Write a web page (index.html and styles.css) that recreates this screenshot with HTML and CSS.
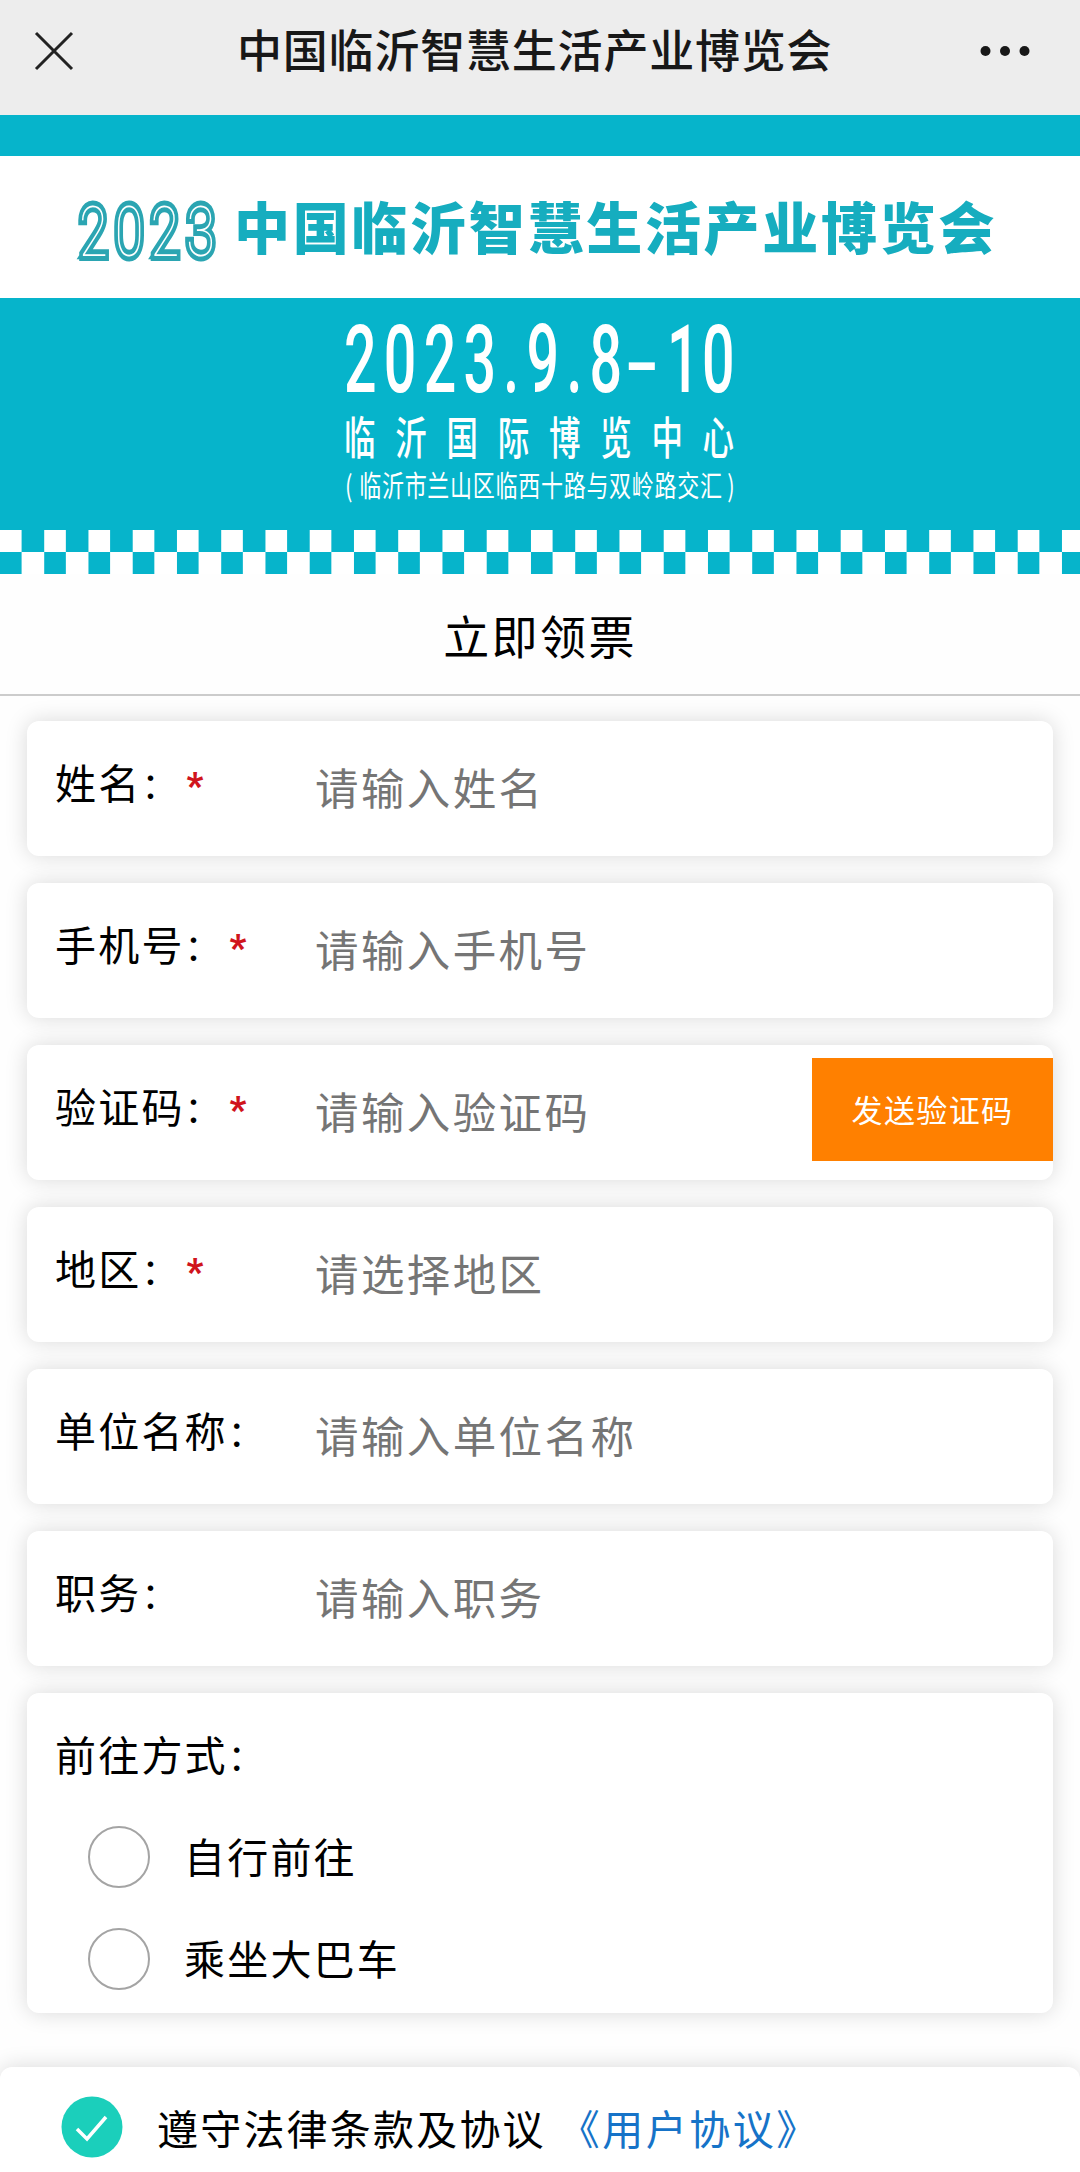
FILE: index.html
```html
<!DOCTYPE html>
<html lang="zh-CN">

<head>
  <meta charset="UTF-8" />
  <meta name="viewport" content="width=device-width, initial-scale=1.0" />
  <title>中国临沂智慧生活产业博览会</title>
  <link rel="stylesheet" href="styles.css">
</head>

<body>
  <div class="navbar">
    <svg class="close" viewBox="0 0 38 38">
      <path d="M1 1L37 37M37 1L1 37" />
    </svg>
    <div class="nav-title">中国临沂智慧生活产业博览会</div>
    <svg class="more" viewBox="0 0 50 12">
      <circle cx="5.5" cy="6" r="5" />
      <circle cx="25" cy="6" r="5" />
      <circle cx="44.5" cy="6" r="5" />
    </svg>
  </div>

  <div class="banner">
    <div class="banner-title">
      <svg class="year" viewBox="0 0 160 110">
        <text transform="translate(5 84) scale(0.74 1)">2023</text>
      </svg>
      <span>中国临沂智慧生活产业博览会</span>
    </div>
    <svg class="banner-info" viewBox="0 0 440 232">
      <text class="date" transform="translate(24 94) scale(0.61 1)">2023.9.8</text>
      <text class="dash" transform="translate(304 94) scale(1.05 1)">-</text>
      <text class="date date-end" transform="translate(347 94) scale(0.61 1)">10</text>
      <text class="place" transform="translate(24 157) scale(0.7 1)">临沂国际博览中心</text>
      <text class="address" transform="translate(25 199) scale(0.76 1)">(<tspan dx="8">临沂市兰山区临西十路与双岭路交汇</tspan><tspan dx="6">)</tspan></text>
    </svg>
    <div class="checker"></div>
  </div>

  <div class="section-title">立即领票</div>

  <form class="form">
    <div class="card">
      <label for="name">姓名<b>：</b><i>*</i></label>
      <input type="text" id="name" placeholder="请输入姓名" />
    </div>
    <div class="card">
      <label for="phone">手机号<b>：</b><i>*</i></label>
      <input type="text" id="phone" placeholder="请输入手机号" />
    </div>
    <div class="card">
      <label for="code">验证码<b>：</b><i>*</i></label>
      <input type="text" id="code" placeholder="请输入验证码" />
      <button type="button" class="send">发送验证码</button>
    </div>
    <div class="card">
      <label for="area">地区<b>：</b><i>*</i></label>
      <input type="text" id="area" placeholder="请选择地区" readonly />
    </div>
    <div class="card">
      <label for="company">单位名称<b>：</b></label>
      <input type="text" id="company" placeholder="请输入单位名称" />
    </div>
    <div class="card">
      <label for="job">职务<b>：</b></label>
      <input type="text" id="job" placeholder="请输入职务" />
    </div>
    <div class="card card-radio">
      <div class="radio-title">前往方式<b>：</b></div>
      <label class="option"><input type="radio" name="way" /><span>自行前往</span></label>
      <label class="option"><input type="radio" name="way" /><span>乘坐大巴车</span></label>
    </div>
  </form>

  <div class="agree">
    <svg class="check" viewBox="0 0 62 62">
      <circle cx="31" cy="31" r="30.5" />
      <path d="M16 33L26 43L45 21" />
    </svg>
    <span>遵守法律条款及协议</span>
    <a class="link">《用户协议》</a>
  </div>
</body>

</html>
```

FILE: styles.css
```css
* {
  box-sizing: border-box;
}

body {
  margin: 0;
  height: 2172px;
  overflow: hidden;
  background: #fefefe;
  color: #000;
  font-family: "Noto Sans CJK SC", sans-serif;
  font-size: 41px;
  letter-spacing: 2.2px;
}

svg {
  display: block;
  overflow: visible;
}

/* 顶部导航 */
.navbar {
  display: flex;
  align-items: center;
  height: 115px;
  padding: 0 50px 14px 35px;
  background: #ededed;
}

.close {
  width: 38px;
  height: 38px;
  fill: none;
  stroke: #222;
  stroke-width: 3;
}

.nav-title {
  margin: 0 auto 3px 164px;
  color: #181818;
  font-size: 45px;
  font-weight: 500;
  line-height: 60px;
  letter-spacing: 0.8px;
}

.more {
  width: 50px;
  height: 12px;
  fill: #181818;
}

/* 横幅 */
.banner {
  height: 459px;
  padding-top: 41px;
  background: #06b4cb;
}

.banner-title {
  display: flex;
  align-items: center;
  height: 142px;
  padding-left: 74px;
  background: #fff;
  color: #16adbf;
  font-size: 56px;
  font-weight: 900;
  letter-spacing: 2.7px;
  white-space: nowrap;
}

.banner-title span {
  margin-bottom: 5px;
}

.year {
  width: 160px;
  height: 110px;
}

/* 细字白芯 + 粗描边, 形成空心线字 */
.year text {
  fill: #fff;
  stroke: #2ba5b2;
  stroke-width: 10px;
  paint-order: stroke;
  font-family: Roboto, sans-serif;
  font-size: 71px;
  font-weight: 100;
  letter-spacing: 9.5px;
}

.banner-info {
  width: 440px;
  height: 232px;
  margin: 0 auto;
  fill: #fff;
}

.date {
  font-family: Roboto, sans-serif;
  font-size: 94px;
  font-weight: 500;
  letter-spacing: 11.9px;
}

.date-end {
  letter-spacing: 4px;
}

.dash {
  font-family: "DejaVu Sans", sans-serif;
  font-size: 94px;
  letter-spacing: 0;
}

.place {
  font-size: 45px;
  font-weight: 500;
  letter-spacing: 28.2px;
}

.address {
  font-size: 29px;
  font-weight: 400;
  letter-spacing: 0.9px;
}

.checker {
  height: 44px;
  background: conic-gradient(#fff 25%, #06b4cb 0 50%, #fff 0 75%, #06b4cb 0) 21.6px 0 / 44.25px 44px;
}

.section-title {
  height: 122px;
  border-bottom: 2px solid #ccc;
  font-size: 46px;
  line-height: 120px;
  letter-spacing: 2.4px;
  text-align: center;
}

/* 表单 */
.form {
  display: flex;
  flex-direction: column;
  gap: 27px;
  padding: 25px 27px 0;
}

.card {
  display: flex;
  height: 135px;
  padding-left: 28px;
  background: #fff;
  border-radius: 12px;
  box-shadow: 0 0 22px rgba(0, 0, 0, 0.15);
}

.card label {
  width: 260px;
  line-height: 120px;
  white-space: nowrap;
}

.card b {
  display: inline-block;
  width: 43px;
  font-size: 36px;
  font-weight: 400;
  line-height: 1;
}

.card i {
  display: inline-block;
  margin-left: 2px;
  color: #d0141c;
  font-family: Roboto, sans-serif;
  font-size: 36px;
  font-style: normal;
  font-weight: 900;
  line-height: 1;
  vertical-align: 1px;
}

.card input[type="text"] {
  flex: 1;
  min-width: 0;
  height: 130px;
  padding: 0;
  border: none;
  outline: none;
  background: none;
  font-family: inherit;
  font-size: 43.5px;
  letter-spacing: 2.4px;
}

.card input::placeholder {
  color: #757575;
}

.send {
  width: 241px;
  height: 103px;
  margin-top: 13px;
  padding: 0 0 2px;
  border: none;
  background: #ff8000;
  color: #fff;
  font-family: inherit;
  font-size: 31px;
  letter-spacing: 1.4px;
}

.card-radio {
  flex-direction: column;
  height: 320px;
}

.radio-title {
  height: 113px;
  line-height: 120px;
}

.card .option {
  display: flex;
  align-items: center;
  width: auto;
  height: 102px;
  padding-left: 33px;
}

.option input {
  appearance: none;
  width: 62px;
  height: 62px;
  margin: 0 34px 0 0;
  border: 2.5px solid #a4a4a4;
  border-radius: 50%;
}

.option span {
  margin-bottom: 4px;
}

/* 底部协议 */
.agree {
  display: flex;
  align-items: center;
  height: 120px;
  margin-top: 54px;
  padding: 0 0 0 61px;
  background: #fff;
  border-radius: 12px;
  box-shadow: 0 0 22px rgba(0, 0, 0, 0.15);
}

.check {
  width: 62px;
  height: 62px;
  margin-right: 34px;
  fill: #1bcfbb;
}

.check path {
  fill: none;
  stroke: #fff;
  stroke-width: 3.5;
}

.link {
  margin-left: 13px;
  color: #1673c8;
  letter-spacing: 2.5px;
}
```
